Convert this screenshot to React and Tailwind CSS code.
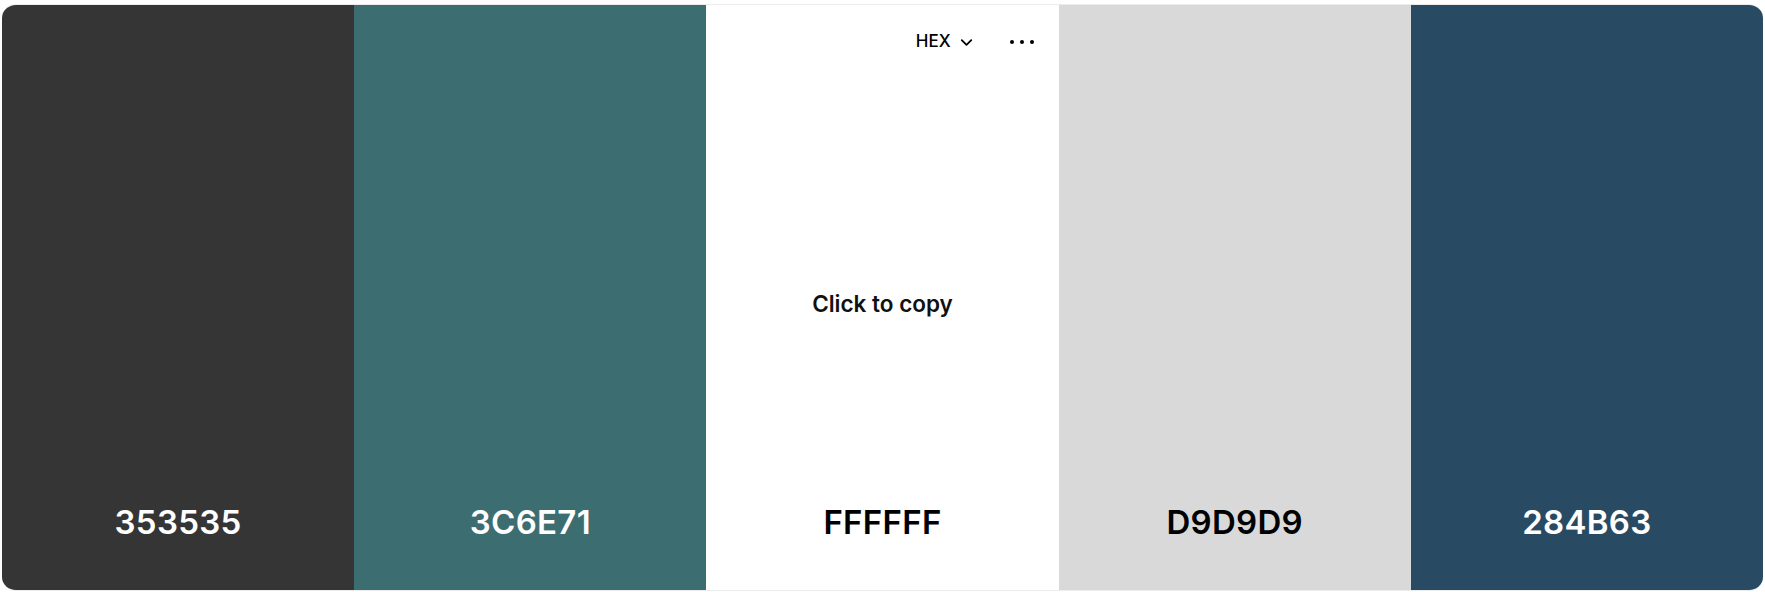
import React from 'react';
import { ChevronDown } from 'lucide-react';

const COLORS = [
  { hex: '353535', bg: 'bg-[#353535]', text: 'text-white' },
  { hex: '3C6E71', bg: 'bg-[#3C6E71]', text: 'text-white' },
  { hex: 'FFFFFF', bg: 'bg-white', text: 'text-black', active: true },
  { hex: 'D9D9D9', bg: 'bg-[#D9D9D9]', text: 'text-black' },
  { hex: '284B63', bg: 'bg-[#284B63]', text: 'text-white' },
];

function Swatch({ c }) {
  return (
    <div className={`relative flex-1 flex flex-col justify-end items-center ${c.bg} ${c.text}`}>
      {c.active && (
        <>
          <div className="absolute top-[24px] right-[25px] flex items-center h-[26px]">
            <button className="flex items-center gap-[6px] text-[17px] font-medium text-black">
              HEX
              <ChevronDown size={19} strokeWidth={2.25} />
            </button>
            <div className="ml-[34px] flex items-center gap-[6px]">
              <span className="w-[4px] h-[4px] rounded-full bg-black" />
              <span className="w-[4px] h-[4px] rounded-full bg-black" />
              <span className="w-[4px] h-[4px] rounded-full bg-black" />
            </div>
          </div>
          <div className="absolute inset-0 pt-[12px] flex items-center justify-center">
            <span className="text-[22.5px] font-semibold text-[#111]">Click to copy</span>
          </div>
        </>
      )}
      <div className="relative pb-[48px] text-[33px] leading-[40px] font-semibold tracking-[0.3px]">
        {c.hex}
      </div>
    </div>
  );
}

export default function App() {
  return (
    <div className="bg-white pt-[4px] px-[2px] h-[592px] overflow-hidden" style={{ fontFamily: 'Inter, "Noto Sans", sans-serif' }}>
      <div className="flex h-[587px] rounded-[14px] overflow-hidden border-t border-b border-[#ececec]">
        {COLORS.map((c) => (
          <Swatch key={c.hex} c={c} />
        ))}
      </div>
    </div>
  );
}
